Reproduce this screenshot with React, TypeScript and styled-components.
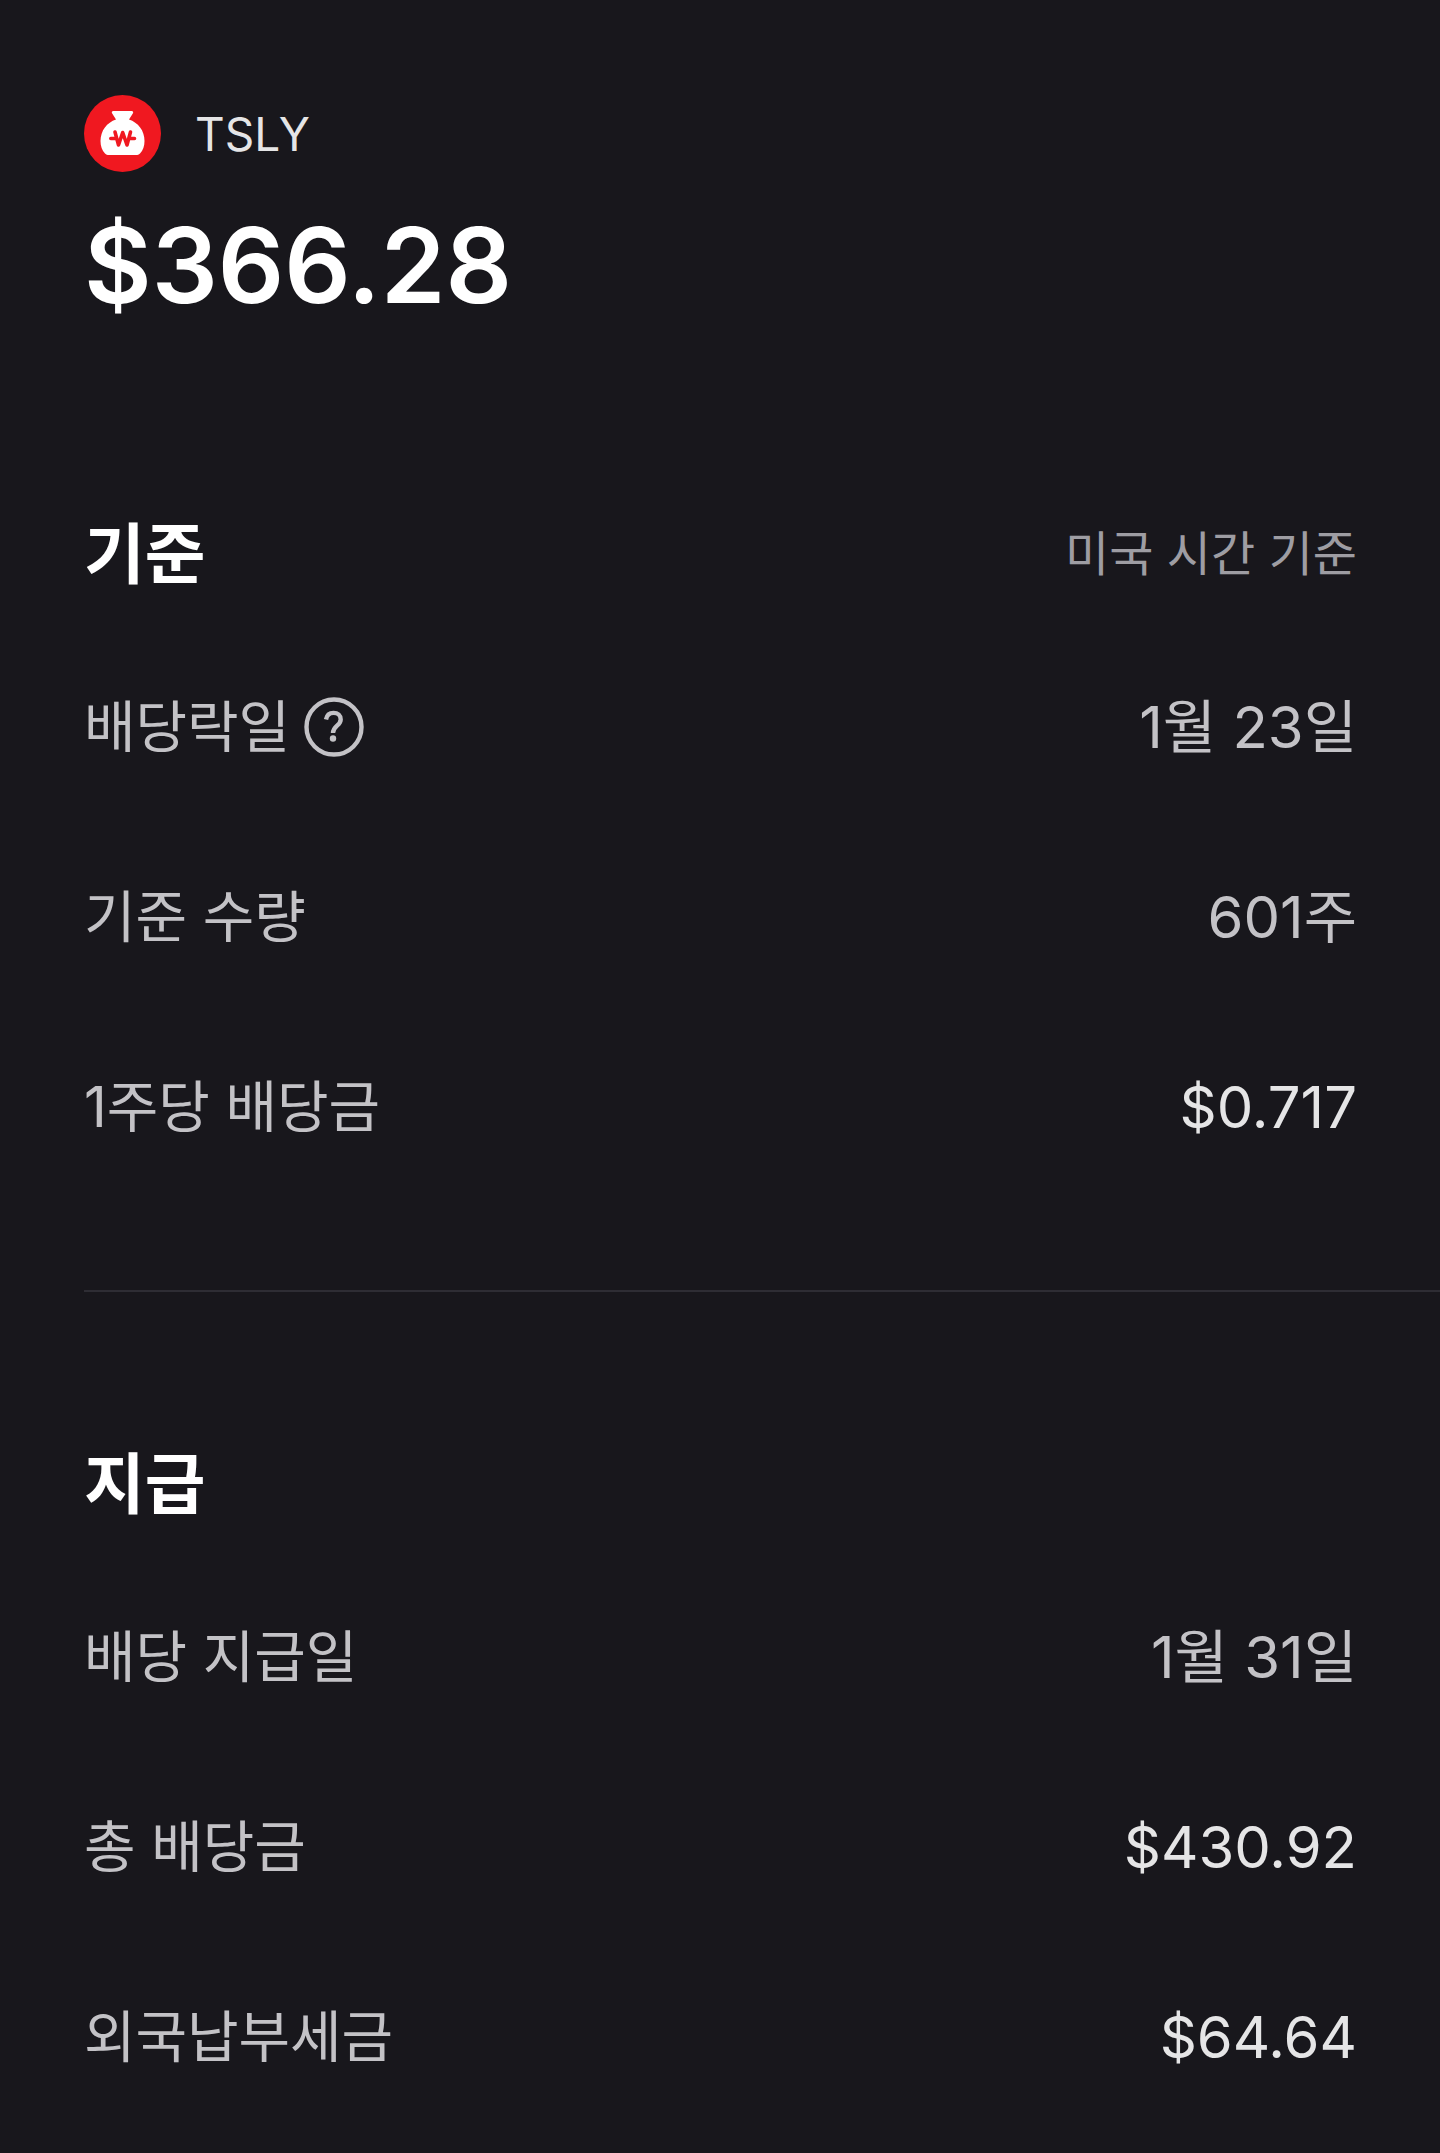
import React from "react";
import styled, { createGlobalStyle } from "styled-components";

const GlobalStyle = createGlobalStyle`
  * { box-sizing: border-box; }
  body {
    margin: 0;
    background: #18171c;
    color: #c3c2c6;
    font-family: Inter, "Noto Sans CJK KR", sans-serif;
    line-height: 80px;
  }
`;

const Page = styled.main`
  display: flex;
  flex-direction: column;
  padding: 92px 0 24px 84px;
`;

const Summary = styled.header`
  display: flex;
  flex-direction: column;
  gap: 25px;
`;

const Stock = styled.div`
  display: flex;
  align-items: center;
  gap: 34px;
  height: 83px;
  font-size: 46px;
  color: #e5e5e6;
`;

const Logo = styled.svg`
  width: 77px;
  height: 77px;
  flex: none;
`;

const Total = styled.h1`
  margin: 0;
  line-height: 130px;
  font-size: 104px;
  font-weight: 600;
  color: #fff;
`;

const Section = styled.section`
  padding: 164px 83px 88px 0;
  & + & {
    padding-top: 132px;
    padding-bottom: 0;
    border-top: 2px solid #2e2d34;
  }
`;

const SectionHead = styled.div`
  display: flex;
  align-items: center;
  justify-content: space-between;
  height: 120px;
  margin-bottom: 18px;
`;

const Title = styled.h2`
  margin: 0;
  font-size: 66px;
  font-weight: 700;
  color: #fff;
`;

const Note = styled.span`
  font-size: 48px;
  color: #9e9da3;
`;

const List = styled.dl`
  margin: 0;
`;

const Row = styled.div`
  display: flex;
  align-items: center;
  justify-content: space-between;
  height: 190px;
`;

const Label = styled.dt`
  display: flex;
  align-items: center;
  gap: 14px;
  font-size: 56px;
`;

const Value = styled.dd<{ $bright?: boolean }>`
  margin: 0;
  font-size: 58px;
  color: ${(p) => (p.$bright ? "#e5e5e6" : "inherit")};
`;

const HelpButton = styled.button`
  display: flex;
  padding: 0;
  border: 0;
  background: none;
  color: inherit;
  cursor: pointer;
`;

const HelpIcon = styled.svg`
  width: 60px;
  height: 60px;
`;

function MoneyBag() {
  return (
    <Logo viewBox="0 0 77 77" aria-hidden="true">
      <circle cx="38.5" cy="38.5" r="38.5" fill="#f01820" />
      <path
        fill="#fff"
        d="M29.5 16h18c1.600 0 2.200 1.200 1.300 2.500L45 24.500C54 27.500 60.500 35.500 60.500 46c0 5-1.500 9.500-4.500 12.500-1.200 1.300-2.500 1.500-4 1.500H25c-1.500 0-2.800-.2-4-1.500-3-3-4.500-7.500-4.500-12.500 0-10.500 6.500-18.500 15.500-21.500L28.200 18.500C27.300 17.200 27.900 16 29.500 16Z"
      />
      <path
        fill="none"
        stroke="#f01820"
        strokeWidth="3.600"
        strokeLinecap="round"
        strokeLinejoin="round"
        d="M26.800 43.500h4M46.500 43.500h4M31 37l3.500 13 4.200-12.500L43 50l3.500-13"
      />
    </Logo>
  );
}

function Help() {
  return (
    <HelpButton type="button" aria-label="배당락일 도움말">
      <HelpIcon viewBox="0 0 60 60" fill="none" stroke="currentColor" aria-hidden="true">
        <circle cx="30" cy="30" r="27.500" strokeWidth="4.400" />
        <path d="M22 22.500c.8-4.400 3.600-6.600 7.500-6.600 4.300 0 7.200 2.700 7.200 6.600 0 6.200-7.700 6.300-7.700 13.500" strokeWidth="4.400" />
        <circle cx="29" cy="41.500" r="3.200" fill="currentColor" stroke="none" />
      </HelpIcon>
    </HelpButton>
  );
}

export default function App() {
  return (
    <>
      <GlobalStyle />
      <Page>
        <Summary>
          <Stock><MoneyBag />TSLY</Stock>
          <Total>$366.28</Total>
        </Summary>
        <Section>
          <SectionHead><Title>기준</Title><Note>미국 시간 기준</Note></SectionHead>
          <List>
            <Row><Label>배당락일<Help /></Label><Value>1월 23일</Value></Row>
            <Row><Label>기준 수량</Label><Value>601주</Value></Row>
            <Row><Label>1주당 배당금</Label><Value $bright>$0.717</Value></Row>
          </List>
        </Section>
        <Section>
          <SectionHead><Title>지급</Title></SectionHead>
          <List>
            <Row><Label>배당 지급일</Label><Value>1월 31일</Value></Row>
            <Row><Label>총 배당금</Label><Value $bright>$430.92</Value></Row>
            <Row><Label>외국납부세금</Label><Value $bright>$64.64</Value></Row>
          </List>
        </Section>
      </Page>
    </>
  );
}
